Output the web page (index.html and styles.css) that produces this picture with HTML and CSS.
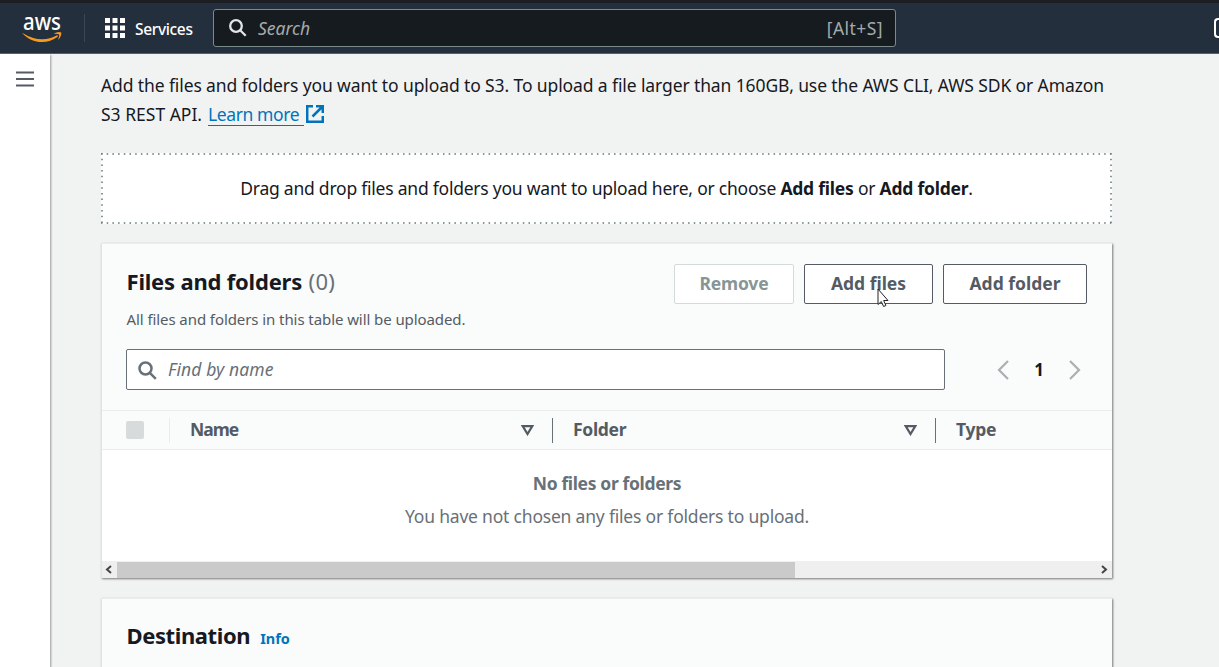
FILE: index.html
```html
<!DOCTYPE html>
<html lang="en">
<head>
<meta charset="utf-8">
<title>Upload</title>
<link rel="stylesheet" href="styles.css">
</head>
<body>
<header class="topbar">
  <svg class="aws" width="42" height="39" viewBox="0 -12 42 39"><text class="aws-text" x="1" y="14.5" textLength="38" lengthAdjust="spacingAndGlyphs">aws</text><path d="M0 17.700Q19 29.500 35 20.200Q36.500 20.300 35.700 21.700C25 30 9 28.500 0 17.700Z" fill="#f79a1f"/><path d="M31.500 18.800Q36.500 15.800 39.300 17.500Q39.600 21.500 36 24.900Q37.500 20.500 37.200 19.400Q36 18.700 31.500 18.800Z" fill="#f79a1f"/></svg>
  <span class="nav-divider"></span>
  <svg class="grid-icon" width="20" height="20" viewBox="0 0 20 20" fill="#fff"><path d="M0 0h5v5H0zM7.500 0h5v5h-5zM15 0h5v5h-5zM0 7.500h5v5H0zM7.500 7.500h5v5h-5zM15 7.500h5v5h-5zM0 15h5v5H0zM7.500 15h5v5h-5zM15 15h5v5h-5z"/></svg>
  <span class="services">Services</span>
  <div class="global-search">
    <svg width="18" height="18" viewBox="0 0 18 18" fill="none" stroke="#e3e6e6" stroke-width="2.300"><circle cx="7" cy="7" r="5.800"/><path d="M11.200 11.200l5.500 5.500"/></svg>
    <span class="search-label">Search</span><span class="shortcut">[Alt+S]</span>
  </div>
  <span class="shell-icon"></span>
</header>
<div class="shell">
  <aside class="side"><svg width="18" height="16" viewBox="0 0 18 16" stroke="#545b64" stroke-width="2.200"><path d="M0 1.500h18M0 8h18M0 14.500h18"/></svg></aside>
  <main class="main">
    <p class="intro"><span class="line intro-one">Add the files and folders you want to upload to S3. To upload a file larger than 160GB, use the AWS CLI, AWS SDK or Amazon</span><span class="line second"><span class="intro-two">S3 REST API.</span><a class="learn">Learn more</a><svg width="18" height="18" viewBox="0 0 18 18" fill="none" stroke="#0073bb" stroke-width="2.500"><path d="M7 1.200H1.200v15.600h15.600V11M10 1.200h6.800V8M16.500 1.500L6.500 11.500"/></svg></span></p>
    <div class="drop"><span class="drop-text">Drag and drop files and folders you want to upload here, or choose <b>Add files</b> or <b>Add folder</b>.</span>
      <svg class="dots" width="1011" height="71" fill="none" stroke="#5f7478" stroke-width="1.500" stroke-dasharray="1.500 4.200"><path d="M0 1h1011M0 70h1011M1 0v71M1010 0v71"/></svg></div>
    <section class="card files">
      <div class="card-head">
        <div><h2 class="title">Files and folders <span class="count">(0)</span></h2><p class="desc">All files and folders in this table will be uploaded.</p></div>
        <div class="actions"><button class="btn disabled">Remove</button><button class="btn add-files">Add files</button><button class="btn add-folder">Add folder</button></div>
      </div>
      <div class="filter">
        <div class="find"><svg width="19" height="19" viewBox="0 0 19 19" fill="none" stroke="#687078" stroke-width="2.500"><circle cx="7.500" cy="7.500" r="6"/><path d="M11.800 11.800l6 6"/></svg><span class="find-text">Find by name</span></div>
        <div class="pager"><svg width="12" height="20" viewBox="0 0 12 20" fill="none" stroke="#aab0b2" stroke-width="2.200"><path d="M11 1L2 10l9 9"/></svg><b>1</b><svg width="12" height="20" viewBox="0 0 12 20" fill="none" stroke="#aab0b2" stroke-width="2.200"><path d="M1 1l9 9-9 9"/></svg></div>
      </div>
      <div class="thead">
        <div class="th check"><span class="box"></span></div>
        <div class="th"><span class="label name">Name</span><svg width="13" height="11" viewBox="0 0 13 11" fill="none" stroke="#545b64" stroke-width="2.200"><path d="M1.700 1.200h9.600L6.500 9z"/></svg></div>
        <div class="th"><span class="label folder">Folder</span><svg width="13" height="11" viewBox="0 0 13 11" fill="none" stroke="#545b64" stroke-width="2.200"><path d="M1.700 1.200h9.600L6.500 9z"/></svg></div>
        <div class="th last"><span class="label">Type</span></div>
      </div>
      <div class="empty"><b class="empty-title">No files or folders</b><span class="empty-text">You have not chosen any files or folders to upload.</span></div>
      <div class="scroll"><span class="arrow"><svg width="7" height="9" viewBox="0 0 7 9" fill="none" stroke="#444" stroke-width="2"><path d="M6 1L2 4.500 6 8"/></svg></span><span class="thumb"></span><span class="arrow right"><svg width="7" height="9" viewBox="0 0 7 9" fill="none" stroke="#444" stroke-width="2"><path d="M1 1l4 3.500L1 8"/></svg></span></div>
    </section>
    <section class="card destination"><h2 class="title dest-title">Destination</h2><a class="info">Info</a></section>
  </main>
</div>
<svg class="cursor" width="12" height="20" viewBox="0 0 12 20"><path d="M1 1v15.500l3.300-3 2.300 5 2.300-1-2.200-5H11z" fill="#fff" stroke="#222" stroke-width="1"/></svg>
</body>
</html>
```

FILE: styles.css
```css
* { box-sizing: border-box; }
body { margin: 0; height: 667px; overflow: hidden; font-family: "Noto Sans", "Open Sans", sans-serif; font-size: 17.5px; color: #16191f; background: #f1f3f3; }
h2, p { margin: 0; }
span, b, a { white-space: nowrap; }
.topbar { height: 54px; background: #242f3d; border-top: 3px solid #1c1e24; border-bottom: 1px solid #56616a; display: flex; align-items: center; position: relative; }
.aws { margin-left: 22px; margin-top: -12px; overflow: visible; }
.aws-text { font: 500 23px "Noto Sans", sans-serif; fill: #fff; }
.nav-divider { width: 1px; height: 28px; margin-left: 20px; background: #3b4653; }
.grid-icon { margin-left: 20px; }
.services { margin-left: 10px; width: 78px; color: #fff; font-size: 15.5px; letter-spacing: -.35px; font-weight: 500; padding-top: 1px; }
.global-search { width: 683px; height: 38px; background: #161b20; border: 1px solid #7b8b8b; border-radius: 3px; display: flex; align-items: center; padding: 0 12px 0 15px; color: #a4abab; }
.search-label { margin-left: 11px; font-style: italic; }
.shortcut { margin-left: auto; letter-spacing: .45px; }
.shell-icon { width: 5px; height: 20px; margin-left: auto; border: 2px solid #fff; border-right: 0; border-radius: 4px 0 0 4px; }
.shell { display: flex; height: 613px; }
.side { width: 50px; background: #fff; box-shadow: 1px 1px 2px #999; padding: 14px 0 0 16px; flex: none; }
.main { width: 1062px; padding: 17px 0 0 51px; flex: none; }
.intro { height: 82px; }
.line { display: flex; height: 28px; line-height: 28px; }
.intro-one { letter-spacing: -.11px; }
.second { align-items: center; }
.intro-two { width: 107px; padding-top: 1px; }
.learn { color: #0073bb; width: 96px; height: 25px; line-height: 26px; border-bottom: 1px solid #0073bb; letter-spacing: -.4px; }
.second svg { margin: 1px 0 0 2px; }
.drop { width: 1011px; height: 71px; background: #fff; display: flex; align-items: center; justify-content: center; position: relative; }
.drop-text { letter-spacing: -.23px; padding-bottom: 2px; }
.dots { position: absolute; left: 0; top: 0; }
.card { width: 1011px; background: #fafbfb; border-left: 1px solid #e0e3e3; border-top: 1px solid #e9ecec; box-shadow: 1px 1px 2px #777; }
.files { height: 335px; margin-top: 19px; }
.card-head { height: 105px; padding: 20px 25px 0 24.5px; display: flex; justify-content: space-between; }
.title { font-size: 22px; line-height: 34px; font-weight: 700; white-space: nowrap; letter-spacing: -.2px; }
.count { font-weight: 400; color: #687078; margin-left: 1px; letter-spacing: .3px; }
.desc { margin-top: 8px; line-height: 26px; font-size: 15px; color: #545b64; white-space: nowrap; letter-spacing: -.08px; }
.actions { display: flex; gap: 10px; }
.btn { height: 40px; border: 1px solid #545b64; border-radius: 2px; background: #fff; color: #545b64; font: 700 17.5px "Noto Sans", sans-serif; padding: 0 0 2px; white-space: nowrap; }
.disabled { width: 120px; border-color: #d5dbdb; color: #879596; letter-spacing: -.2px; }
.add-files { width: 129px; }
.add-folder { width: 144px; }
.filter { height: 61px; padding: 0 31px 0 24px; display: flex; justify-content: space-between; }
.find { width: 819px; height: 41px; background: #fff; border: 1px solid #687078; border-radius: 2px; display: flex; align-items: center; padding-left: 11px; }
.find svg { margin-top: 1px; }
.find-text { margin-left: 11px; font-style: italic; color: #687078; padding-bottom: 1px; letter-spacing: .1px; }
.pager { height: 41px; display: flex; align-items: center; gap: 25px; }
.pager b { font-size: 17px; }
.thead { height: 40px; border-top: 1px solid #eaeded; border-bottom: 1px solid #eaeded; display: grid; grid-template-columns: 68px 383px 383px 1fr; align-items: center; color: #545b64; font-weight: 700; }
.th { display: flex; align-items: center; justify-content: space-between; height: 25px; padding: 0 18px 0 20px; border-right: 1px solid #687078; }
.check { padding-left: 24px; border-color: #eaeded; }
.last { border: 0; }
.label { padding-bottom: 2px; letter-spacing: -.3px; }
.name { letter-spacing: -1px; }
.box { width: 18px; height: 18px; background: #d7dbdb; border-radius: 2px; }
.empty { height: 111px; background: #fff; color: #687078; display: flex; flex-direction: column; align-items: center; padding-top: 17px; line-height: 33px; }
.empty-title { letter-spacing: -.35px; }
.empty-text { letter-spacing: -.2px; }
.scroll { height: 17px; background: #efefef; display: flex; align-items: center; }
.arrow { width: 15px; height: 17px; padding-right: 2px; display: flex; justify-content: center; align-items: center; }
.right { margin-left: auto; padding: 0; }
.thumb { width: 678px; height: 16px; background: #cacaca; }
.destination { margin-top: 20px; height: 90px; display: flex; padding: 19px 25px 19px 24.5px; align-items: baseline; }
.dest-title { letter-spacing: -.4px; }
.info { margin-left: 10px; color: #0073bb; font-size: 14.500px; font-weight: 700; }
.cursor { position: absolute; left: 877px; top: 288px; }
```
